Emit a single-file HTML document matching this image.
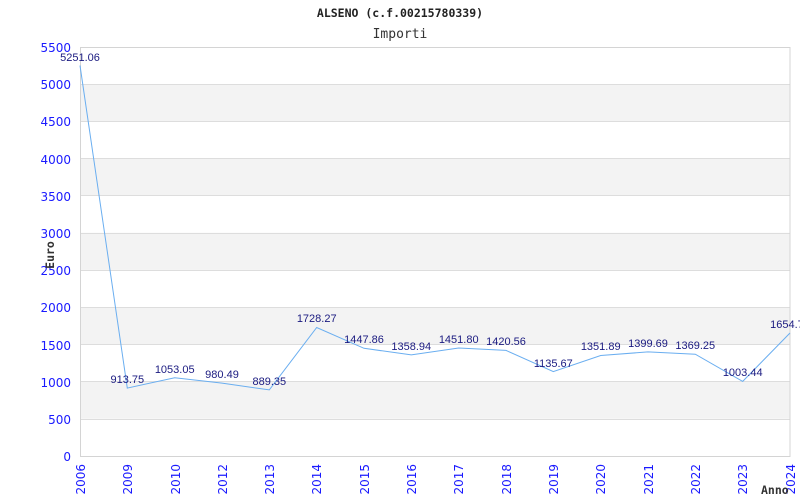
<!DOCTYPE html>
<html><head><meta charset="utf-8"><style>
html,body{margin:0;padding:0;background:#fff;width:800px;height:500px;overflow:hidden}
</style></head><body>
<svg width="800" height="500" xmlns="http://www.w3.org/2000/svg" style="display:block">
<text x="400" y="17" text-anchor="middle" font-family="DejaVu Sans Mono, monospace" font-weight="bold" font-size="11.5" fill="#222">ALSENO (c.f.00215780339)</text>
<text x="400" y="38" text-anchor="middle" font-family="DejaVu Sans Mono, monospace" font-size="13" fill="#333">Importi</text>
<g fill="#f3f3f3">
<rect x="80" y="84" width="710" height="37.2"/>
<rect x="80" y="158.4" width="710" height="37.2"/>
<rect x="80" y="232.7" width="710" height="37.2"/>
<rect x="80" y="307.1" width="710" height="37.2"/>
<rect x="80" y="381.6" width="710" height="37.2"/>
</g>
<g stroke="#dddddd" stroke-width="1">
<line x1="80" x2="790" y1="84.5" y2="84.5"/><line x1="80" x2="790" y1="121.5" y2="121.5"/>
<line x1="80" x2="790" y1="158.5" y2="158.5"/><line x1="80" x2="790" y1="195.5" y2="195.5"/>
<line x1="80" x2="790" y1="233.5" y2="233.5"/><line x1="80" x2="790" y1="270.5" y2="270.5"/>
<line x1="80" x2="790" y1="307.5" y2="307.5"/><line x1="80" x2="790" y1="344.5" y2="344.5"/>
<line x1="80" x2="790" y1="381.5" y2="381.5"/><line x1="80" x2="790" y1="419.5" y2="419.5"/>
</g>
<rect x="80.5" y="47.5" width="709.5" height="409" fill="none" stroke="#d4d4d4"/>
<g font-family="DejaVu Sans, sans-serif" font-size="12" fill="#1a1aff" text-anchor="end">
<text x="71" y="52">5500</text><text x="71" y="89">5000</text><text x="71" y="126">4500</text>
<text x="71" y="164">4000</text><text x="71" y="201">3500</text><text x="71" y="238">3000</text>
<text x="71" y="275">2500</text><text x="71" y="312">2000</text><text x="71" y="350">1500</text>
<text x="71" y="387">1000</text><text x="71" y="424">500</text><text x="71" y="461">0</text>
</g>
<text transform="translate(54,255) rotate(-90)" text-anchor="middle" font-family="DejaVu Sans Mono, monospace" font-weight="bold" font-size="11.5" fill="#333">Euro</text>
<g font-family="DejaVu Sans, sans-serif" font-size="12" fill="#1a1aff" text-anchor="end">
<text transform="translate(85,464) rotate(-90)">2006</text>
<text transform="translate(132,464) rotate(-90)">2009</text>
<text transform="translate(180,464) rotate(-90)">2010</text>
<text transform="translate(227,464) rotate(-90)">2012</text>
<text transform="translate(274,464) rotate(-90)">2013</text>
<text transform="translate(321,464) rotate(-90)">2014</text>
<text transform="translate(369,464) rotate(-90)">2015</text>
<text transform="translate(416,464) rotate(-90)">2016</text>
<text transform="translate(463,464) rotate(-90)">2017</text>
<text transform="translate(511,464) rotate(-90)">2018</text>
<text transform="translate(558,464) rotate(-90)">2019</text>
<text transform="translate(605,464) rotate(-90)">2020</text>
<text transform="translate(653,464) rotate(-90)">2021</text>
<text transform="translate(700,464) rotate(-90)">2022</text>
<text transform="translate(747,464) rotate(-90)">2023</text>
<text transform="translate(795,464) rotate(-90)">2024</text>
</g>
<text x="761" y="494" font-family="DejaVu Sans Mono, monospace" font-weight="bold" font-size="11.5" fill="#333">Anno</text>
<polyline fill="none" stroke="#6aaef0" stroke-width="1" points="80,65.5 127.3,388.1 174.7,377.7 222,383.1 269.3,389.9 316.7,327.5 364,348.3 411.3,354.9 458.7,348 506,350.4 553.3,371.6 600.7,355.5 648,351.9 695.3,354.2 742.7,381.4 790,333"/>
<g font-family="Liberation Sans, sans-serif" font-size="11" fill="#1a1a80" text-anchor="middle">
<text x="80" y="61">5251.06</text>
<text x="127.3" y="383">913.75</text>
<text x="174.7" y="373">1053.05</text>
<text x="222" y="378">980.49</text>
<text x="269.3" y="385">889.35</text>
<text x="316.7" y="322">1728.27</text>
<text x="364" y="343">1447.86</text>
<text x="411.3" y="350">1358.94</text>
<text x="458.7" y="343">1451.80</text>
<text x="506" y="345">1420.56</text>
<text x="553.3" y="367">1135.67</text>
<text x="600.7" y="350">1351.89</text>
<text x="648" y="347">1399.69</text>
<text x="695.3" y="349">1369.25</text>
<text x="742.7" y="376">1003.44</text>
<text x="790" y="328">1654.71</text>
</g>
</svg>
</body></html>
